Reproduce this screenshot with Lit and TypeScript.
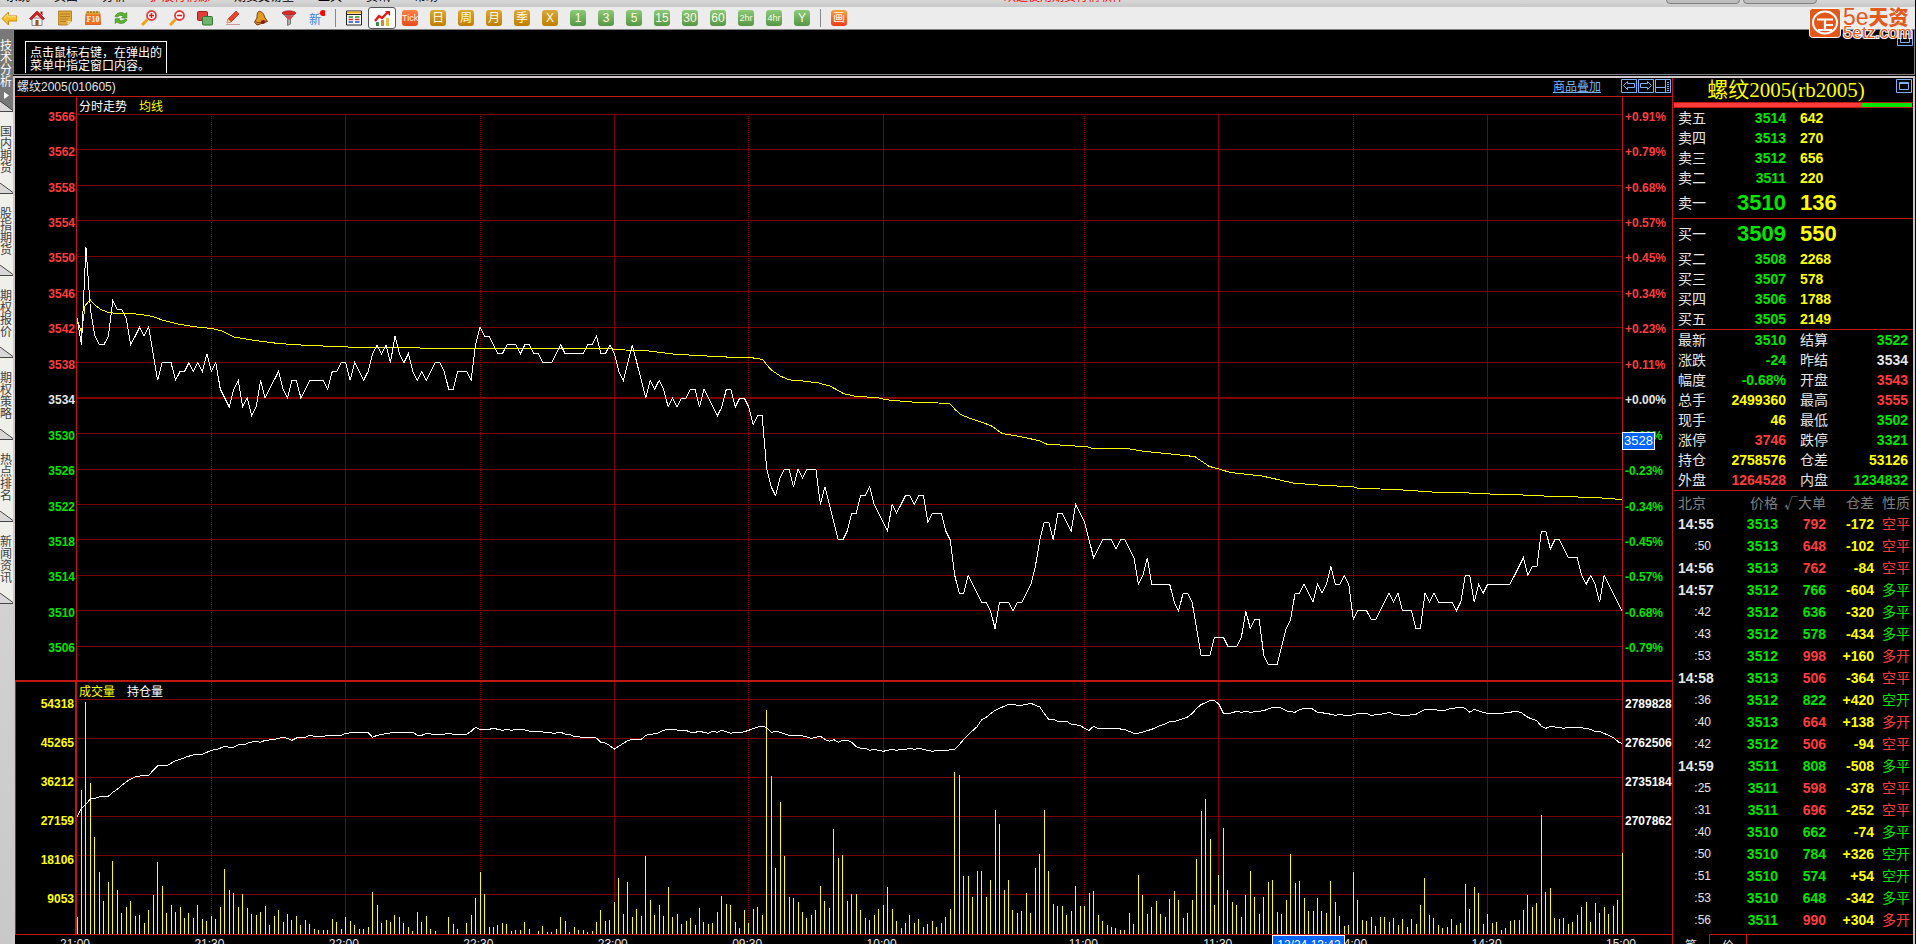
import { LitElement, html, svg, css } from "lit";
import { customElement } from "lit/decorators.js";
import { classMap } from "lit/directives/class-map.js";

/* ---------- session data, one value per trading minute ---------- */

const MINUTES = 345;

// last price, counted from 3500
const PRICE_BASE = 3500;
const prices = [
  43, 40, 51, 44, 41, 40, 40, 41, 45, 44, 44, 43, 40, 41, 42, 41, 42, 39, 36, 38, 38, 38, 36, 37, 37, 38, 37, 38, 37, 39,
  37, 38, 35, 34, 33, 35, 36, 33, 34, 32, 33, 36, 34, 35, 36, 37, 35, 34, 36, 36, 34, 35, 36, 36, 36, 36, 35, 37, 37, 38,
  38, 36, 38, 37, 36, 37, 39, 40, 39, 40, 38, 41, 39, 38, 39, 37, 36, 37, 36, 37, 38, 38, 37, 35, 35, 37, 37, 37, 36, 40,
  42, 41, 41, 40, 39, 39, 40, 40, 40, 39, 40, 40, 39, 39, 38, 38, 38, 39, 40, 39, 39, 39, 39, 39, 40, 40, 41, 39, 39, 40,
  39, 37, 36, 38, 40, 38, 36, 34, 36, 35, 36, 35, 33, 34, 33, 34, 34, 35, 35, 33, 35, 34, 33, 32, 33, 35, 35, 33, 34, 34,
  33, 31, 32, 32, 26, 24, 23, 25, 26, 26, 24, 26, 25, 26, 26, 26, 22, 24, 22, 20, 18, 18, 19, 21, 21, 23, 23, 24, 22, 21,
  20, 19, 22, 21, 22, 23, 23, 22, 23, 23, 20, 21, 21, 21, 19, 18, 14, 12, 12, 14, 13, 12, 11, 11, 10, 8, 11, 11, 11, 10,
  11, 11, 12, 13, 15, 18, 20, 20, 18, 21, 21, 20, 19, 22, 21, 20, 18, 16, 17, 18, 18, 18, 17, 18, 18, 17, 16, 13, 14, 16,
  13, 13, 13, 13, 13, 11, 10, 12, 12, 11, 8, 5, 5, 5, 7, 7, 7, 6, 6, 6, 7, 10, 8, 9, 9, 5, 4, 4, 4, 6,
  8, 9, 12, 12, 13, 12, 11, 13, 12, 13, 15, 13, 13, 14, 13, 9, 10, 10, 10, 9, 9, 10, 11, 12, 11, 12, 10, 10, 10, 8,
  8, 12, 11, 12, 11, 11, 11, 11, 10, 11, 14, 14, 11, 13, 12, 13, 13, 13, 13, 13, 13, 14, 15, 16, 14, 15, 15, 19, 19, 17,
  18, 18, 17, 16, 16, 16, 14, 13, 14, 13, 11, 14, 13, 12, 11, 10,
];

// average price: [minute, price above 3500]
const averages: [number, number][] = [
  [0, 42.9], [1, 41.4], [1.8, 44.4], [2.9, 45.1], [4, 44.5], [5.3, 44], [7.3, 43.6], [12, 43.55], [16, 43.3],
  [17.5, 43.1], [19, 42.8], [23, 42.3], [27, 42], [30, 41.85], [32.5, 41.55], [35, 40.9], [39, 40.55], [45, 40.15],
  [51, 39.95], [61, 39.75], [75, 39.7], [78, 39.6], [85, 39.55], [92, 39.6], [118, 39.6], [123, 39.4], [127, 39.35],
  [133.4, 38.95], [144, 38.65], [152, 38.5], [153.2, 38.3], [154.1, 37.7], [155.1, 37.15], [157, 36.5], [159, 36.05],
  [161.7, 35.95], [165.6, 35.7], [168.2, 35.35], [171.2, 34.5], [173.8, 34.2], [178.7, 34.05], [180.9, 33.8],
  [186.5, 33.55], [194.7, 33.4], [195.2, 33.2], [196.2, 32.65], [197.3, 32.15], [199.5, 31.7], [204.1, 30.9],
  [206.6, 30], [210.7, 29.65], [214.8, 29.2], [216.6, 28.8], [225.6, 28.5], [227, 28.3], [234.5, 28.3], [238.2, 28],
  [244.2, 27.7], [249.6, 27.4], [252.8, 26.3], [255.3, 25.95], [257.6, 25.6], [264.7, 25.2], [271.8, 24.4],
  [279.6, 24.1], [284.8, 24.05], [285.9, 23.85], [295.6, 23.65], [302.7, 23.4], [309.7, 23.35], [312.7, 23.2],
  [319.4, 23.15], [329.8, 22.9], [338.8, 22.8], [345, 22.55],
];

// top of each minute's volume bar in plot units; 117 units make one grid step
const VOLUME_FLOOR = 819;
const volumeTops = [
  771, 390, 126, 369, 531, 636, 723, 666, 603, 690, 759, 741, 723, 768, 765, 789, 750, 705, 606, 678, 759, 735, 756, 741,
  774, 759, 774, 735, 777, 783, 768, 777, 741, 627, 690, 699, 741, 702, 744, 762, 765, 756, 738, 795, 768, 750, 786, 762,
  780, 768, 795, 780, 792, 807, 810, 810, 810, 777, 786, 807, 771, 783, 795, 807, 807, 801, 696, 735, 789, 780, 786, 765,
  771, 789, 801, 813, 756, 786, 768, 807, 813, 819, 819, 771, 792, 807, 819, 789, 765, 714, 636, 702, 801, 801, 795, 789,
  792, 813, 810, 810, 786, 807, 819, 813, 798, 816, 816, 807, 771, 783, 816, 801, 810, 810, 816, 813, 786, 750, 783, 780,
  726, 654, 762, 666, 771, 747, 768, 588, 720, 765, 735, 768, 681, 771, 762, 792, 783, 774, 795, 744, 786, 792, 789, 756,
  708, 732, 735, 786, 804, 750, 789, 747, 741, 765, 150, 348, 624, 426, 588, 711, 714, 726, 756, 774, 765, 750, 678, 723,
  744, 507, 594, 585, 723, 702, 702, 750, 774, 780, 765, 747, 735, 681, 747, 783, 804, 789, 765, 789, 777, 801, 792, 783,
  801, 789, 771, 747, 336, 345, 648, 648, 711, 633, 633, 711, 660, 450, 492, 690, 660, 750, 759, 753, 699, 759, 624, 582,
  450, 633, 732, 738, 738, 765, 753, 678, 738, 738, 699, 693, 765, 783, 795, 801, 804, 810, 810, 759, 792, 645, 705, 762,
  741, 723, 762, 771, 717, 693, 720, 774, 759, 720, 597, 453, 417, 537, 735, 645, 504, 690, 726, 735, 771, 705, 633, 711,
  762, 711, 666, 660, 756, 762, 720, 582, 669, 663, 714, 753, 753, 714, 753, 759, 663, 726, 768, 798, 795, 636, 720, 780,
  783, 771, 798, 771, 771, 786, 774, 795, 777, 801, 777, 792, 735, 654, 765, 774, 795, 804, 801, 777, 795, 789, 672, 747,
  681, 699, 792, 762, 789, 786, 810, 804, 783, 780, 780, 750, 705, 741, 729, 465, 696, 684, 774, 777, 774, 792, 786, 765,
  741, 726, 786, 729, 759, 741, 762, 738, 720, 579,
];

// open interest: [minute, height in plot units]
const interest: [number, number][] = [
  [0, 470], [1, 445], [2, 432], [3, 417], [4, 415], [5.5, 409], [7, 409], [8, 397], [9, 388], [10, 376], [11.5, 361],
  [13, 351], [14.5, 347], [16, 346], [18, 317], [20, 317], [21, 310], [22, 302], [23.5, 296], [24.6, 290], [26.5, 283],
  [28, 283], [30, 271], [31.5, 267], [33, 259], [34, 262], [35, 262], [36, 254], [37.5, 253], [38.6, 247], [40, 244],
  [41, 247], [42, 241], [43.8, 239], [46, 232], [47, 235], [48, 241], [49, 234], [51, 232], [52, 226], [53, 229],
  [55, 229], [56, 226], [59, 226], [60, 220], [61.3, 218], [65, 217], [66, 232], [67, 226], [69, 221], [71, 217],
  [75, 217], [76, 226], [77, 226], [78, 220], [79.7, 223], [81.7, 223], [83, 220], [84, 223], [87, 223], [88, 214],
  [89, 202], [90, 208], [92, 208], [93, 205], [95, 211], [96, 208], [97, 211], [98, 208], [99.3, 208], [101, 213],
  [103.4, 215], [106.6, 220], [108, 217], [109, 222], [110.2, 224], [111, 229], [113, 232], [115.8, 232], [117, 247],
  [118.2, 250], [120, 267], [122, 250], [123, 242], [124, 238], [126, 238], [127, 226], [129.7, 219], [131, 211],
  [132, 208], [133.6, 208], [134.2, 211], [136, 211], [137, 217], [138, 217], [139, 214], [141, 220], [142, 214],
  [143, 217], [144, 211], [146, 220], [147, 217], [148.5, 217], [150, 211], [151.7, 202], [153, 199], [154, 202],
  [155, 217], [156, 214], [157, 217], [159, 226], [161.6, 226], [164, 235], [166, 229], [167, 238], [168, 244],
  [169, 239], [170, 247], [171, 241], [172, 241], [173, 247], [174, 260], [175, 265], [176, 265], [177, 271],
  [178, 268], [180, 274], [182, 268], [183, 271], [184, 268], [185, 268], [186, 265], [187, 268], [188, 265],
  [191, 274], [192, 271], [194, 271], [196, 268], [197, 254], [198, 238], [200, 212], [201, 200], [202, 180],
  [203, 172], [205, 151], [208, 133], [209, 133], [210, 136], [211, 136], [213, 130], [215, 141], [216, 161],
  [217, 178], [218, 178], [219, 184], [221, 184], [222, 193], [223, 194], [224, 197], [225, 205], [226, 211],
  [227, 199], [228, 205], [232, 205], [234, 209], [236, 220], [237, 220], [240, 208], [242, 196], [243, 192],
  [244, 185], [245.5, 183], [248, 171], [249, 161], [250, 145], [251, 134], [253, 122], [254, 122], [255, 133],
  [256, 160], [257.4, 160], [259, 154], [260, 157], [261, 154], [262, 157], [265, 152], [267, 142], [268.5, 142],
  [270.3, 154], [272, 157], [273, 149], [274, 145], [275.7, 145], [277, 157], [279, 160], [281, 166], [282, 163],
  [283, 166], [284.3, 166], [286, 161], [288, 161], [289, 166], [292, 161], [293, 157], [294, 163], [296, 166],
  [297.4, 166], [298, 163], [299, 163], [300, 155], [301, 148], [303, 148], [304, 151], [305.4, 151], [306.6, 146],
  [309, 142], [310, 145], [311, 157], [312, 148], [313.2, 154], [315, 160], [318, 160], [320, 157], [321, 154],
  [322.4, 157], [324, 172], [325, 178], [326, 182], [327, 199], [328, 205], [329, 199], [332, 205], [333, 202],
  [335.3, 202], [337.7, 207], [339, 214], [340, 214], [342, 226], [343.3, 235], [344.4, 248], [345, 250],
];

const timeTicks: [string, number][] = [
  ["21:00", 30], ["21:30", 30], ["22:00", 30], ["22:30", 30], ["23:00", 30], ["09:30", 30], ["10:00", 45],
  ["11:00", 30], ["11:30", 30], ["14:00", 30], ["14:30", 30],
];
const solidMinutes = [60, 120, 180, 255, 315];
const dottedMinutes = [30, 90, 150, 225, 285];

const percents = [
  "+0.91%", "+0.79%", "+0.68%", "+0.57%", "+0.45%", "+0.34%", "+0.23%", "+0.11%", "+0.00%",
  "-0.11%", "-0.23%", "-0.34%", "-0.45%", "-0.57%", "-0.68%", "-0.79%",
];

const asks = [["卖五", 3514, 642], ["卖四", 3513, 270], ["卖三", 3512, 656], ["卖二", 3511, 220], ["卖一", 3510, 136]];
const bids = [["买一", 3509, 550], ["买二", 3508, 2268], ["买三", 3507, 578], ["买四", 3506, 1788], ["买五", 3505, 2149]];

// label, value, colour, twice per row
const details = [
  ["最新", "3510", "g", "结算", "3522", "g"],
  ["涨跌", "-24", "g", "昨结", "3534", "w"],
  ["幅度", "-0.68%", "g", "开盘", "3543", "r"],
  ["总手", "2499360", "y", "最高", "3555", "r"],
  ["现手", "46", "y", "最低", "3502", "g"],
  ["涨停", "3746", "r", "跌停", "3321", "g"],
  ["持仓", "2758576", "y", "仓差", "53126", "y"],
  ["外盘", "1264528", "r", "内盘", "1234832", "g"],
];

const deals = [
  ["14:55", "3513", "792", "-172", "空平", "r"],
  [":50", "3513", "648", "-102", "空平", "r"],
  ["14:56", "3513", "762", "-84", "空平", "r"],
  ["14:57", "3512", "766", "-604", "多平", "g"],
  [":42", "3512", "636", "-320", "多平", "g"],
  [":43", "3512", "578", "-434", "多平", "g"],
  [":53", "3512", "998", "+160", "多开", "r"],
  ["14:58", "3513", "506", "-364", "空平", "r"],
  [":36", "3512", "822", "+420", "空开", "g"],
  [":40", "3513", "664", "+138", "多开", "r"],
  [":42", "3512", "506", "-94", "空平", "r"],
  ["14:59", "3511", "808", "-508", "多平", "g"],
  [":25", "3511", "598", "-378", "空平", "r"],
  [":31", "3511", "696", "-252", "空平", "r"],
  [":40", "3510", "662", "-74", "多平", "g"],
  [":50", "3510", "784", "+326", "空开", "g"],
  [":51", "3510", "574", "+54", "空开", "g"],
  [":53", "3510", "648", "-342", "多平", "g"],
  [":56", "3511", "990", "+304", "多开", "r"],
];

/* ---------- toolbar ---------- */

const pictureIcons = [
  ["后退", svg`<path d="M1 8.5 7.5 2v4H16v5H7.5v4z" fill="#fbc02d" stroke="#c8860a"/><path d="M3 8.2 7 4.4v2.4h8" fill="none" stroke="#ffe58a"/>`],
  ["首页", svg`<path d="M3 8h10v7.5H3z" fill="#f4f4f4" stroke="#888"/><path d="M.5 8.5 8 1l7.5 7.5-1.7 1.3L8 4.4 2.2 9.8z" fill="#d91e1e" stroke="#8e0f0f" stroke-width=".7"/><path d="M11.5 1.5h2v4l-2-2z" fill="#a01515"/><path d="M6.5 10h3v5.5h-3z" fill="#8a5a2a"/>`],
  ["记事", svg`<path d="M1.500 1h13v10l-4 4h-9z" fill="#e0a83a" stroke="#a8741a" stroke-width=".8"/><path d="M14.500 11h-4v4z" fill="#f6d98e"/><path d="M3 4h10M3 6.500h10M3 9h8M3 11.500h6" stroke="#b27c1e"/>`],
  ["F10", svg`<path d="M1 3.500h14l.5 11H.5z" fill="#f37021" stroke="#c04a08" stroke-width=".7"/><path d="M1 1.500h14v3H1z" fill="#d8a53a"/><path d="M3 1v2M6 1v2M9 1v2M12 1v2" stroke="#7c5a17"/><text x="8" y="12" font-size="8" font-weight="bold" text-anchor="middle" font-family="Liberation Serif, serif" fill="#fff">F10</text>`],
  ["刷新", svg`<path d="M2 6.500C3.500 2 9.500 1.500 12 4l1.800-1.500V8H8.600l1.600-1.800C8.500 5 6 5 4.600 7z" fill="#5cb531" stroke="#37801a" stroke-width=".6"/><path d="M14 9.500C12.500 14 6.500 14.500 4 12l-1.800 1.500V8.700H7L5.800 10c1.700 1 4.200 1 5.600-.8z" fill="#5cb531" stroke="#37801a" stroke-width=".6"/>`],
  ["放大", svg`<path d="M1 15 6.500 9.500" stroke="#f0a020" stroke-width="3"/><circle cx="10.500" cy="5.500" r="4.500" fill="#fff" stroke="#e03a3a" stroke-width="1.800"/><path d="M8 5.500h5M10.500 3v5" stroke="#e01818" stroke-width="1.600"/>`],
  ["缩小", svg`<path d="M1 15 6.500 9.500" stroke="#f0a020" stroke-width="3"/><circle cx="10.500" cy="5.500" r="4.500" fill="#fff" stroke="#e03a3a" stroke-width="1.800"/><path d="M8 5.500h5" stroke="#e01818" stroke-width="1.600"/>`],
  ["叠加", svg`<rect x=".5" y="1.500" width="10" height="9" rx="1" fill="#e23b3b" stroke="#a61c1c"/><rect x="5.500" y="6.500" width="10" height="8.500" rx="1" fill="#6fb36a" stroke="#35743a"/>`],
  ["画线", svg`<path d="M1 14.500h14" stroke="#c99"/><path d="m2 13 1-4 8-8 3 3-8 8z" fill="#e8442c" stroke="#a8250f" stroke-width=".7"/><path d="m2 13 1-4 3 3z" fill="#f4d3a2"/>`],
  ["预警", svg`<path d="M5.500 1.500C9 1 11 4 11.500 7l3 4.500L4 15 1.500 12 4 8c0-3 0-5 1.500-6.500z" fill="#e59a24" stroke="#7a3d0c"/><path d="M2.500 12c3 1.500 8 0 11-1.500" stroke="#7a3d0c" fill="none"/><circle cx="10" cy="12" r="2" fill="#8b1a1a"/>`],
  ["筛选", svg`<path d="M1.500 3 6.500 8.500v7l3-1.500V8.500l5-5.500z" fill="#aaa" stroke="#666" stroke-width=".8"/><ellipse cx="8" cy="3" rx="6.800" ry="2.200" fill="#d92a2a" stroke="#8d1b1b" stroke-width=".6"/><path d="M4 6h8.500L9.500 9.500h-2z" fill="#d94a4a"/>`],
  ["新", svg`<text x="6" y="14" font-size="12" text-anchor="middle" font-family="Noto Sans CJK SC, sans-serif" fill="#3c82dc">新</text><circle cx="14" cy="3" r="3" fill="#f00"/>`],
] as const;

const viewIcons = [
  ["报价表", svg`<path d="M.5 1h15v14H.5z" fill="#fff" stroke="#222"/><path d="M1 2.500h14" stroke="#f0b41e" stroke-width="2"/><path d="M1 4.500h14" stroke="#222"/><path d="M2.500 7H7M9 7h4.500" stroke="#2a8a2a" stroke-width="1.400"/><path d="M2.500 9.500H7M9 9.500h4.500" stroke="#d02a2a" stroke-width="1.400"/><path d="M2.500 12H7M9 12h4.500" stroke="#224ac0" stroke-width="1.400"/>`],
  ["分时图", svg`<path d="M2 12h3v4H2z" fill="#3b8f46"/><path d="M7 10h3v6H7z" fill="#c98a3a"/><path d="M12 8h3v8h-3z" fill="#e6c23e"/><path d="M1 11 5 6l3 2 6-6" fill="none" stroke="#e01818" stroke-width="2.400"/><path d="M11 1h5v5z" fill="#e01818"/>`],
] as const;

const periods: [string, string][] = [
  ["Tick", "tick"], ["日", "gold"], ["周", "gold"], ["月", "gold"], ["季", "gold"], ["X", "gold"],
  ["1", "green"], ["3", "green"], ["5", "green"], ["15", "green"], ["30", "green"], ["60", "green"],
  ["2hr", "green"], ["4hr", "green"], ["Y", "green"],
];

const sideTabs = ["技术分析", "国内期货", "股指期货", "期权报价", "期权策略", "热点排名", "新闻资讯"];

const icon = (body: unknown) => html`<svg class="icon" viewBox="0 0 16 16" aria-hidden="true">${body}</svg>`;

/* ---------- intraday chart ---------- */

@customElement("intraday-chart")
class IntradayChart extends LitElement {
  static styles = css`
    :host {
      display: flex;
      flex-direction: column;
      min-width: 0;
      min-height: 0;
      font: 12px/18px "Liberation Sans", "Noto Sans CJK SC", sans-serif;
      color: #e6e6e6;
    }
    .head {
      display: flex;
      height: 18px;
      padding-left: 2px;
      border-bottom: 1px solid #c01810;
      justify-content: space-between;
    }
    h1 { margin: 0; font-size: 12px; font-weight: 400; line-height: 18px; }
    .tools { display: flex; align-items: flex-start; padding-top: 1px; }
    .overlay { color: #78b4ff; line-height: 16px; margin-right: 20px; }
    .tool { width: 17px; height: 14px; padding: 0; border: 0; background: none; display: block; }
    .tool svg { display: block; width: 17px; height: 14px; }
    .panel { display: grid; min-height: 0; }
    .price { flex: 583 1 0; grid-template-columns: 61px minmax(0, 1fr) 49px; border-bottom: 2px solid #c01810; }
    .volume { flex: 252 1 0; grid-template-columns: 60px minmax(0, 1fr) 49px; border-bottom: 1px solid #c01810; }
    .plot { position: relative; border: solid #c01810; border-width: 0 1px; min-height: 0; }
    .volume .plot { border-left-width: 2px; }
    .canvas { position: absolute; inset: 0; width: 100%; height: 100%; overflow: visible; }
    .canvas * { vector-effect: non-scaling-stroke; fill: none; stroke-width: 1px; shape-rendering: crispEdges; }
    .canvas .grid { stroke: #800000; }
    .canvas .mid { stroke: #800000; stroke-width: 2px; }
    .canvas .dots { stroke: #a00000; stroke-dasharray: 1 1; }
    .canvas .last { stroke: #fff; }
    .canvas .average { stroke: #ff0; }
    .legend { position: relative; display: flex; gap: 12px; padding-left: 2px; line-height: 20px; color: #fff; }
    .yellow { color: #ff0; }
    .scale { display: flex; flex-direction: column; font-weight: bold; white-space: nowrap; min-height: 0; }
    .scale span { flex: 1 1 0; display: flex; align-items: center; min-height: 0; }
    .price .scale { padding: 2px 0 14px; }
    .volume .scale { padding: 2px 0 16px; color: #fff; }
    .left span { justify-content: flex-end; padding-right: 1px; }
    .right span { padding-left: 2px; }
    .volume .left { border-left: 1px solid #c01810; color: #ff0; }
    .up { color: #ff3c3c; }
    .down { color: #00e600; }
    .flat { color: #e6e6e6; }
    .tag {
      position: absolute;
      left: 100%;
      top: 57.5%;
      border: 1px solid #fff;
      background: #0064ff;
      color: #fff;
      font-size: 13px;
      line-height: 16px;
      padding: 0 1px;
    }
    .times { height: 9px; padding: 0 50px 0 61px; overflow: hidden; }
    .track { position: relative; display: flex; height: 9px; }
    .slot { min-width: 0; flex-basis: 0; }
    .time { display: block; width: 32px; margin-left: -17px; text-align: center; }
    .final { margin-right: -15px; }
    .cursor {
      position: absolute;
      top: 0;
      border: 1px solid #fff;
      background: #0064ff;
      color: #fff;
      width: 71px;
      text-align: center;
      line-height: 18px;
    }
  `;

  private priceY(p: number) {
    return 52 + (66 - p) * 26.6;
  }

  private verticals(top: number, bottom: number) {
    return svg`
      ${dottedMinutes.map((m) => svg`<line class="dots" x1=${m} x2=${m} y1=${top} y2=${bottom}></line>`)}
      ${solidMinutes.map((m) => svg`<line class="grid" x1=${m} x2=${m} y1=${top} y2=${bottom}></line>`)}`;
  }

  render() {
    const levels = percents.map((_, i) => 3566 - 4 * i);
    const tone = (i: number) => (i < 8 ? "up" : i > 8 ? "down" : "flat");
    const last = prices.map((p, i) => `${i},${this.priceY(p)}`).join(" ");
    const average = averages.map(([m, p]) => `${m},${this.priceY(p)}`).join(" ");
    const bars = volumeTops.map((t, i) => (t < VOLUME_FLOOR ? `M${i} ${VOLUME_FLOOR + 2}V${t}` : "")).join("");
    return html`
      <div class="head">
        <h1>螺纹2005(010605)</h1>
        <div class="tools">
          <a class="overlay" href="#overlay">商品叠加</a>
          <button class="tool" aria-label="上一品种">
            <svg viewBox="0 0 17 14" fill="none" stroke="#78b4ff"><path d="M.5.5h15v13H.5zM2.500 6.500l4-4v2h7v4h-7v2z" /></svg>
          </button>
          <button class="tool" aria-label="下一品种">
            <svg viewBox="0 0 17 14" fill="none" stroke="#78b4ff"><path d="M.5.5h15v13H.5zM13.500 6.500l-4-4v2h-7v4h7v2z" /></svg>
          </button>
          <button class="tool" aria-label="布局">
            <svg viewBox="0 0 17 14" fill="none" stroke="#78b4ff"><path d="M.5.5h15v13H.5zM.5 8.500h10M10.500.5v13M12 3.500h2M12 5.500h2M12 7.500h2M12 9.500h2M12 11.500h2" /></svg>
          </button>
        </div>
      </div>

      <section class="panel price">
        <div class="scale left">${levels.map((l, i) => html`<span class=${tone(i)}>${l}</span>`)}</div>
        <div class="plot">
          <svg class="canvas" viewBox="0 0 ${MINUTES} 1749" preserveAspectRatio="none">
            ${this.verticals(52, 1749)}
            ${levels.map((l, i) => {
              const y = this.priceY(l - PRICE_BASE);
              return svg`<line class=${i === 8 ? "mid" : "grid"} x1="0" x2=${MINUTES} y1=${y} y2=${y}></line>`;
            })}
            <polyline class="average" points=${average}></polyline>
            <polyline class="last" points=${last}></polyline>
          </svg>
          <div class="legend"><span>分时走势</span><span class="yellow">均线</span></div>
          <div class="tag">3528</div>
        </div>
        <div class="scale right">${percents.map((p, i) => html`<span class=${tone(i)}>${p}</span>`)}</div>
      </section>

      <section class="panel volume">
        <div class="scale left">
          ${[54318, 45265, 36212, 27159, 18106, 9053].map((v) => html`<span>${v}</span>`)}
        </div>
        <div class="plot">
          <svg class="canvas" viewBox="0 66 ${MINUTES} 756" preserveAspectRatio="none">
            ${this.verticals(66, 822)}
            ${[119, 236, 353, 470, 587, 704].map((y) => svg`<line class="grid" x1="0" x2=${MINUTES} y1=${y} y2=${y}></line>`)}
            <path class="average" d=${bars}></path>
            <polyline class="last" points=${interest.map((p) => p.join(",")).join(" ")}></polyline>
          </svg>
          <div class="legend"><span class="yellow">成交量</span><span>持仓量</span></div>
        </div>
        <div class="scale right">
          ${["2789828", "2762506", "2735184", "2707862", "", ""].map((v) => html`<span>${v}</span>`)}
        </div>
      </section>

      <div class="times">
        <div class="track">
          ${timeTicks.map(([t, n]) => html`<div class="slot" style="flex-grow:${n}"><span class="time">${t}</span></div>`)}
          <div><span class="time final">15:00</span></div>
          <div class="cursor" style="left:${(267 / MINUTES) * 100}%">12/24 13:42</div>
        </div>
      </div>
    `;
  }
}

/* ---------- quote panel ---------- */

@customElement("quote-panel")
class QuotePanel extends LitElement {
  static styles = css`
    :host {
      display: flex;
      flex-direction: column;
      box-sizing: border-box;
      border-left: 1px solid #c01810;
      min-height: 0;
      overflow: hidden;
      font: bold 14px/20px "Liberation Sans", "Noto Sans CJK SC", sans-serif;
      color: #e6e6e6;
    }
    .title { position: relative; height: 24px; text-align: center; color: #ff0; }
    h2 { margin: 0; font: 21px/24px "Liberation Serif", "Noto Sans CJK SC", serif; padding-right: 14px; }
    .maximise { position: absolute; right: 1px; top: 1px; width: 16px; height: 14px; padding: 0; border: 0; background: none; }
    .maximise svg { display: block; width: 16px; height: 14px; }
    .ratio { display: flex; height: 4px; border: solid #c01810; border-width: 1px 0; padding: 0 1px; }
    .sell { flex: 188; background: #ff3c3c; }
    .buy { flex: 50; background: #00e600; }
    .book, .details { border-bottom: 1px solid #c01810; padding: 0 5px; }
    .tape { padding: 0 3px 0 5px; }
    table { width: 100%; border-collapse: collapse; table-layout: fixed; }
    th, td { padding: 0; height: 20px; line-height: 20px; white-space: nowrap; }
    th { font-weight: 400; text-align: left; }
    td { text-align: right; }
    .c-name { width: 40px; }
    .c-value { width: 68px; }
    .c-name2 { width: 54px; }
    .second { padding-left: 14px; }
    .size { text-align: left; padding-left: 14px; color: #ff0; }
    .best th, .best td { height: 30px; }
    .best td { font-size: 22px; line-height: 30px; }
    .g { color: #00e600; }
    .r { color: #ff3c3c; }
    .y { color: #ff0; }
    .w { color: #e6e6e6; }
    .tape th, .tape td { height: 22px; line-height: 22px; }
    .tape thead th { color: #808080; text-align: right; font-family: "Noto Sans CJK SC", sans-serif; }
    .tape thead .start { text-align: left; }
    .t-time { width: 40px; }
    .t-price { width: 60px; }
    .t-size { width: 48px; }
    .t-kind { width: 36px; }
    .tape .minute { text-align: left; font-weight: bold; }
    .tape .second-mark { text-align: right; padding-right: 7px; font-size: 12px; font-weight: normal; }
    .kind { font-weight: 400; }
    .tabs { display: flex; align-items: flex-start; margin-top: auto; height: 10px; overflow: hidden; flex: none; }
    .filler { flex: 1; border-top: 1px solid #c01810; }
    .tab {
      box-sizing: border-box;
      width: 37px;
      height: 20px;
      padding: 0;
      border: solid #c01810;
      border-width: 1px 1px 0 0;
      background: none;
      color: #e6e6e6;
      font: 12px/18px "Noto Sans CJK SC", sans-serif;
    }
    .tab.open { border-top-color: #000; }
  `;

  private book(rows: (string | number)[][], best: number) {
    return html`<div class="book">
      <table>
        <colgroup><col class="c-name" /><col class="c-value" /><col /></colgroup>
        <tbody>
          ${rows.map(
            ([name, price, size], i) => html`<tr class=${classMap({ best: i === best })}>
              <th scope="row">${name}</th><td class="g">${price}</td><td class="size">${size}</td>
            </tr>`,
          )}
        </tbody>
      </table>
    </div>`;
  }

  render() {
    return html`
      <div class="title">
        <h2>螺纹2005(rb2005)</h2>
        <button class="maximise" aria-label="最大化">
          <svg viewBox="0 0 16 14" fill="none" stroke="#78b4ff"><path d="M.5.5h15v13H.5zM3.500 3.500h9v7h-9zM3 4.500h10" /></svg>
        </button>
      </div>
      <div class="ratio"><div class="sell"></div><div class="buy"></div></div>
      ${this.book(asks, 4)} ${this.book(bids, 0)}
      <div class="details">
        <table>
          <colgroup><col class="c-name" /><col class="c-value" /><col class="c-name2" /><col /></colgroup>
          <tbody>
            ${details.map(
              ([a, av, ac, b, bv, bc]) => html`<tr>
                <th scope="row">${a}</th><td class=${ac}>${av}</td>
                <th scope="row" class="second">${b}</th><td class=${bc}>${bv}</td>
              </tr>`,
            )}
          </tbody>
        </table>
      </div>
      <div class="tape">
        <table>
          <colgroup><col class="t-time" /><col class="t-price" /><col class="t-size" /><col class="t-size" /><col class="t-kind" /></colgroup>
          <thead>
            <tr><th class="start">北京</th><th>价格</th><th>√大单</th><th>仓差</th><th>性质</th></tr>
          </thead>
          <tbody>
            ${deals.map(
              ([time, price, size, change, kind, tone]) => html`<tr>
                <td class=${time.startsWith(":") ? "second-mark" : "minute"}>${time}</td>
                <td class="g">${price}</td><td class=${tone}>${size}</td><td class="y">${change}</td>
                <td class="kind ${tone}">${kind}</td>
              </tr>`,
            )}
          </tbody>
        </table>
      </div>
      <div class="tabs">
        <button class="tab open">笔</button><button class="tab">价</button>
        <div class="filler"></div>
      </div>
    `;
  }
}

/* ---------- window ---------- */

@customElement("app-root")
class AppRoot extends LitElement {
  static styles = css`
    :host {
      display: flex;
      flex-direction: column;
      height: 100vh;
      position: relative;
      overflow: hidden;
      background: #000;
      font: 12px/13px "Liberation Sans", "Noto Sans CJK SC", sans-serif;
    }
    button { font: inherit; }
    .menu {
      flex: none;
      display: flex;
      align-items: flex-end;
      height: 7px;
      overflow: hidden;
      margin-right: 1px;
      background: linear-gradient(#d8d8d8, #c8c8c8);
      padding-left: 6px;
    }
    .menu a { flex: none; color: #000; text-decoration: none; margin-right: 24px; line-height: 12px; padding-bottom: 4px; }
    .menu .hot { color: #f00; }
    .menu .notice { margin: 0 auto; }
    .menu button {
      flex: none;
      width: 74px;
      height: 18px;
      margin: 0 3px 3px 0;
      padding: 0;
      border: 1px solid #808080;
      border-radius: 4px;
      background: #bdbdbd;
      color: #d00;
    }
    .menu .lastbutton { margin-right: 98px; }
    .toolbar {
      flex: none;
      display: flex;
      align-items: center;
      height: 22px;
      margin-right: 1px;
      background: #ececec;
      border-bottom: 1px solid #808080;
      overflow: hidden;
    }
    .buttons { display: flex; align-items: center; margin-left: -5px; }
    .button {
      display: flex;
      align-items: center;
      justify-content: center;
      box-sizing: border-box;
      width: 28px;
      height: 22px;
      padding: 0;
      border: 0;
      background: none;
    }
    .button.on { border: 1px solid #555; border-radius: 3px; background: #fff; }
    .icon { width: 16px; height: 16px; display: block; }
    .rule { width: 1px; height: 18px; margin: 0 4px; background: #888; }
    .chip {
      width: 16px;
      height: 16px;
      border-radius: 3px;
      color: #fffbe0;
      font: 12px/16px "Liberation Sans", "Noto Sans CJK SC", sans-serif;
      text-align: center;
      overflow: hidden;
    }
    .chip.tick { background: linear-gradient(#f9814a, #e84a18); font-size: 9px; }
    .chip.draw { background: linear-gradient(#fba040, #ee3c1c); }
    .chip.gold { background: linear-gradient(#d9a93a, #c07e00); }
    .chip.green { background: linear-gradient(#8cca78, #569646); }
    .chip.small { font-size: 9px; }
    .logo { position: absolute; right: 4px; top: 8px; display: flex; gap: 2px; color: #e25a1c; }
    .logo svg { width: 32px; height: 30px; display: block; }
    .brand { font-size: 23px; line-height: 18px; white-space: nowrap; }
    .brand b { font-size: 20px; font-weight: 900; }
    .site { font-size: 17px; line-height: 11px; -webkit-text-stroke: 2px #fff; paint-order: stroke fill; }

    .body { flex: 1; display: flex; min-height: 0; }
    .side { flex: none; width: 13px; background: linear-gradient(#e2e2e2, #c8c8c8); }
    .sidetab {
      position: relative;
      display: flex;
      flex-direction: column;
      justify-content: flex-start;
      align-items: flex-start;
      box-sizing: border-box;
      width: 13px;
      height: 82px;
      padding: 13px 0 0;
      border: 0;
      border-bottom: 1px solid #444;
      background: #f0f0ea;
      color: #404040;
      font: 12px/12px "Noto Sans CJK SC", sans-serif;
      text-align: center;
      overflow: hidden;
      word-break: break-all;
    }
    .sidetab.current { background: #787878; color: #fff; padding-top: 9px; }
    .sidetab .arrow { display: block; width: 5px; height: 7px; margin: 5px 0 0 4px; }
    .corner { position: absolute; left: 0; bottom: 0; width: 13px; height: 10px; }
    .label { display: block; width: 12px; height: 48px; }
    .work { flex: 1; display: flex; flex-direction: column; min-width: 0; margin-right: 1px; }
    .notes {
      flex: none;
      position: relative;
      box-sizing: border-box;
      height: 45px;
      padding: 11px 11px 0;
      border: 1px solid #808080;
      border-top: 0;
      margin-bottom: 1px;
      display: flex;
      overflow: hidden;
    }
    .hint {
      box-sizing: border-box;
      margin: 0;
      width: 142px;
      height: 32px;
      padding: 5px 0 0 4px;
      border: 1px solid #fff;
      border-bottom: 0;
      color: #fff;
    }
    .restore { position: absolute; right: 1px; top: 0; width: 16px; height: 16px; padding: 0; border: 0; background: none; }
    .restore svg { display: block; }
    .desk {
      flex: 1;
      display: grid;
      grid-template-columns: minmax(0, 1fr) 241px;
      min-height: 0;
      border: 2px solid #d0c8c8;
      border-bottom: 0;
    }
  `;

  render() {
    return html`
      <nav class="menu">
        ${["系统", "页面", "分析"].map((t) => html`<a href="#menu">${t}</a>`)}
        <a class="hot" href="#menu">扩展行情源</a>
        ${["期货交易室", "工具", "资讯", "帮助"].map((t) => html`<a href="#menu">${t}</a>`)}
        <a class="hot notice" href="#menu">欢迎使用期货行情软件</a>
        <button>交易</button><button class="lastbutton">资讯</button>
      </nav>
      <div class="toolbar">
        <div class="buttons">
          ${pictureIcons.map(([name, body]) => html`<button class="button" aria-label=${name}>${icon(body)}</button>`)}
          <span class="rule"></span>
          ${viewIcons.map(
            ([name, body], i) =>
              html`<button class=${classMap({ button: true, on: i === 1 })} aria-label=${name}>${icon(body)}</button>`,
          )}
          ${periods.map(
            ([name, tone]) => html`<button class="button">
              <span class="chip ${tone} ${/hr$/.test(name) ? "small" : ""}">${name}</span>
            </button>`,
          )}
          <span class="rule"></span>
          <button class="button"><span class="chip draw">画</span></button>
        </div>
      </div>
      <div class="body">
        <nav class="side">
          ${sideTabs.map(
            (t, i) => html`<button class=${classMap({ sidetab: true, current: i === 0 })}>
              <span class="label">${t}</span>
              ${i === 0 ? html`<svg class="arrow" viewBox="0 0 5 7"><path d="M0 0 5 3.500 0 7z" fill="#fff" /></svg>` : ""}
              <svg class="corner" viewBox="0 0 13 10"><path d="M0 0v10h13z" fill="#d8d8d8" /><path d="M0 0 13 9.500" stroke="#444" /></svg>
            </button>`,
          )}
        </nav>
        <div class="work">
          <div class="notes">
            <p class="hint">点击鼠标右键，在弹出的菜单中指定窗口内容。</p>
            <button class="restore" aria-label="还原">
              <svg width="16" height="16" viewBox="0 0 16 16" fill="none" stroke="#78b4ff"><path d="M.5.5h15v15H.5zM3.500 3.500h9v9h-9zM3 4.500h10" /></svg>
            </button>
          </div>
          <div class="desk">
            <intraday-chart></intraday-chart>
            <quote-panel></quote-panel>
          </div>
        </div>
      </div>
      <div class="logo">
        <svg viewBox="0 0 32 30" fill="none" stroke="#fff" stroke-width="2">
          <rect x=".5" y=".5" width="31" height="29" rx="3" fill="#e2581a" stroke="#fff" stroke-width="1" />
          <ellipse cx="16" cy="14.500" rx="12" ry="11" />
          <path d="M8 11.500h16M16 11.500v11M16 17h8M9 22h14" stroke-width="2.200" />
        </svg>
        <div>
          <div class="brand">5e<b>天资</b></div>
          <div class="site">5etz.com</div>
        </div>
      </div>
    `;
  }
}
